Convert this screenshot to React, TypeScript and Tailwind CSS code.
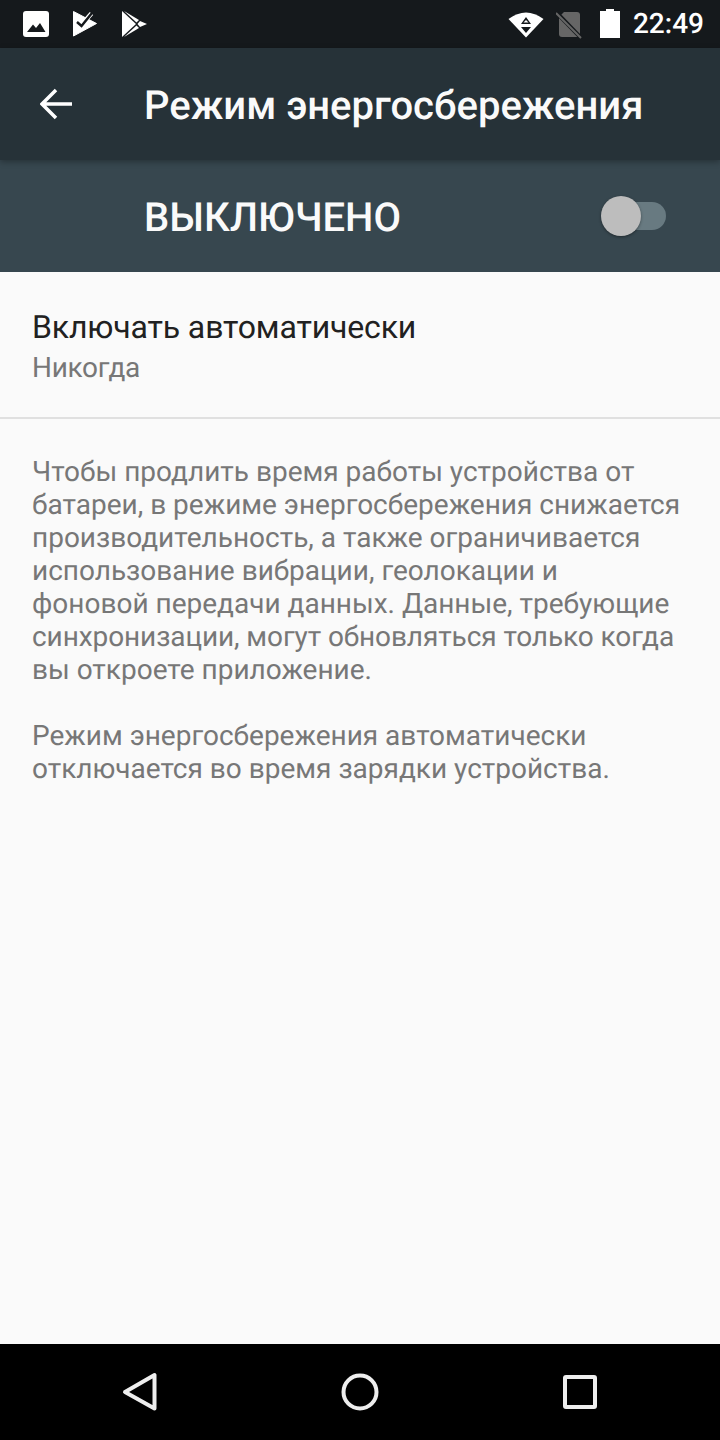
const F = "font-['Roboto',sans-serif] [text-rendering:geometricPrecision]";

function StatusIcons() {
  return (
    <div className="flex items-center gap-[23px] pl-[23px]">
      <svg width="26" height="26" viewBox="0 0 26 26">
        <rect x="0" y="0" width="26" height="26" rx="3" fill="#fff" />
        <path d="M4 21 L10 13.5 L13 17 L17 12 L22.500 21 Z" fill="#15191c" />
      </svg>
      <svg width="26" height="28" viewBox="0 0 26 28">
        <path d="M1.500 1.500 L24.500 13.500 L1.500 26 Z" fill="#fff" strokeLinejoin="round" stroke="#fff" strokeWidth="1" />
        <path d="M11 13 L19.500 3.500" fill="none" stroke="#fff" strokeWidth="4.500" />
        <path d="M5 12 L9.500 16 L20 3" fill="none" stroke="#15191c" strokeWidth="2.500" />
      </svg>
      <svg width="26" height="28" viewBox="0 0 26 28">
        <path d="M1 1 L15 14 L1 27 Z" fill="#fff" />
        <path d="M3 1 L18 10 L15.500 12.500 Z" fill="#fff" />
        <path d="M3 27 L18 18 L15.500 15.500 Z" fill="#fff" />
        <path d="M19 11 L26 14 L19 17 L16.500 14 Z" fill="#fff" />
      </svg>
    </div>
  );
}

export default function App() {
  return (
    <div className={`${F} flex h-[1440px] w-[720px] flex-col overflow-hidden bg-[#fafafa]`}>
      <div className="flex h-[48px] items-center justify-between bg-[#15191c]">
        <StatusIcons />
        <div className="flex items-center pr-[16px]">
          <svg width="36" height="28" viewBox="0 0 36 28">
            <path d="M0.500 9 Q18 -4 35.500 9 L18 27.500 Z" fill="#fff" />
            <path d="M18 7 L13 14 L23 14 Z M13 17 L23 17 L18 23 Z" fill="#15191c" />
            <path d="M18 10 L15.500 12.500 L20.500 12.500 Z" fill="#fff" />
          </svg>
          <svg className="ml-[12px]" width="28" height="30" viewBox="0 0 28 30">
            <path d="M8 3 H21 Q24 3 24 6 V26 Q24 28 22 28 H6 Q3 28 3 25 V8 Z" fill="#666" />
            <path d="M0 3 L26 30" stroke="#15191c" strokeWidth="4" />
            <path d="M0 4 L25 29" stroke="#666" strokeWidth="2" />
          </svg>
          <svg className="ml-[16px]" width="20" height="30" viewBox="0 0 20 30">
            <path d="M6 0 H14 V2 H20 V29 H0 V2 H6 Z" fill="#fff" />
          </svg>
          <span className="ml-[13px] text-[28px] leading-[32px] font-medium text-white">22:49</span>
        </div>
      </div>

      <header className="relative z-10 flex h-[112px] items-center bg-[#263238] shadow-[0_2px_6px_rgba(0,0,0,0.3)]">
        <svg className="ml-[40px]" width="33" height="32" viewBox="0 0 33 32">
          <path d="M32 16 H2 M16 2 L2 16 L16 30" fill="none" stroke="#fff" strokeWidth="3.500" />
        </svg>
        <h1 className="mt-[4px] ml-[71px] text-[40px] leading-[48px] font-medium text-[#fafafa]">Режим энергосбережения</h1>
      </header>

      <div className="flex h-[112px] items-center justify-between bg-[#37474f]">
        <span className="mt-[4px] ml-[144px] text-[40px] leading-[48px] font-medium text-[#fafafa]">ВЫКЛЮЧЕНО</span>
        <div className="relative mr-[54px] h-[28px] w-[58px] rounded-full bg-[#687a81]">
          <span className="absolute top-[-6px] left-[-7px] h-[40px] w-[40px] rounded-full bg-[#bdbdbd] shadow-[0_1px_3px_rgba(0,0,0,0.4)]" />
        </div>
      </div>

      <div className="flex h-[147px] flex-col border-b-2 border-[#e0e0e0] px-[32px] pt-[36px]">
        <div className="text-[32px] leading-[38px] tracking-[-0.14px] text-[#212121]">Включать автоматически</div>
        <div className="mt-[4px] text-[28px] leading-[36px] tracking-[-0.3px] text-[#777777]">Никогда</div>
      </div>

      <div className="flex-1 px-[32px] pt-[36px] text-[28px] leading-[33px] text-[#777777]">
        <p>
          Чтобы продлить время работы устройства от<br />
          батареи, в режиме энергосбережения снижается<br />
          производительность, а также ограничивается<br />
          использование вибрации, геолокации и<br />
          фоновой передачи данных. Данные, требующие<br />
          <span className="tracking-[-0.09px]">синхронизации, могут обновляться только когда</span><br />
          вы откроете приложение.
        </p>
        <p className="mt-[33px]">
          Режим энергосбережения автоматически<br />
          отключается во время зарядки устройства.
        </p>
      </div>

      <nav className="flex h-[96px] items-center justify-between bg-black px-[122px]">
        <svg width="36" height="40" viewBox="0 0 36 40">
          <path d="M32.500 3 V36.500 L3 20 Z" fill="none" stroke="#eee" strokeWidth="4" strokeLinejoin="round" />
        </svg>
        <svg width="38" height="38" viewBox="0 0 38 38">
          <circle cx="19" cy="19" r="16.500" fill="none" stroke="#eee" strokeWidth="4" />
        </svg>
        <svg width="36" height="36" viewBox="0 0 36 36">
          <rect x="3" y="3" width="30" height="30" rx="1" fill="none" stroke="#eee" strokeWidth="4" />
        </svg>
      </nav>
    </div>
  );
}
